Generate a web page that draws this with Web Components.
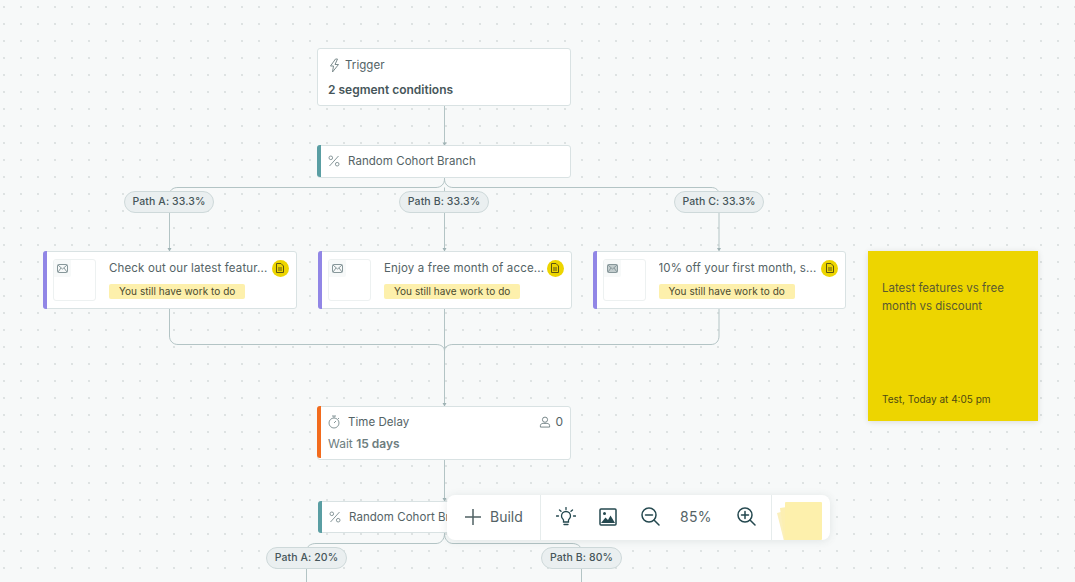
<!DOCTYPE html>
<html>
<head>
<meta charset="utf-8">
<title>Flow</title>
<style>
  html, body { margin: 0; height: 100%; overflow: hidden; }
  body { font-family: Inter, "Liberation Sans", sans-serif; color: #4c5b5e; }
</style>
</head>
<body>
<flow-canvas>
  <svg slot="edges" width="1075" height="582" viewBox="0 0 1075 582" fill="none" stroke="#b3c4c5" stroke-width="1">
    <path d="M444.5 106V143"/>
    <path d="M444.5 178V179C444.5 184 441 187.500 436 187.500H178C173 187.500 169.500 190 169.500 195V249"/>
    <path d="M444.500 178V179C444.500 184 448 187.500 453 187.500H711C716 187.500 719 190 719 195V249"/>
    <path d="M444.500 187.500V249"/>
    <path d="M169.500 309V336C169.500 341 173 344.500 178 344.500H436C441 344.500 444.500 347 444.500 351"/>
    <path d="M719 309V336C719 341 716 344.500 711 344.500H453C448 344.500 444.500 347 444.500 351"/>
    <path d="M444.500 309V404"/>
    <path d="M444.500 460V499"/>
    <path d="M444.500 533V534C444.500 539 441 543.500 436 543.500H316C311 543.500 306.500 546 306.500 551V582"/>
    <path d="M444.500 533V534C444.500 539 448 543.500 453 543.500H572C577 543.500 581.500 546 581.500 551V582"/>
    <g fill="#9fb2b4" stroke="none">
      <path d="M442.500 142.500H446.500L444.500 146Z"/>
      <path d="M167.500 248H171.500L169.500 251.500Z"/>
      <path d="M442.500 248H446.500L444.500 251.500Z"/>
      <path d="M717 248H721L719 251.500Z"/>
      <path d="M442.500 403H446.500L444.500 406.500Z"/>
      <path d="M442.500 498H446.500L444.500 501.500Z"/>
    </g>
  </svg>

  <flow-node style="left:317px;top:48px;width:254px;height:58px">
    <node-title label="Trigger" gap="5">
      <svg slot="icon" width="11" height="15" viewBox="0 0 11 15" fill="none" stroke="#7d8c8e" stroke-width="1" stroke-linejoin="round"><path d="M6.500 1 1.500 8H4.500L3.500 14 9.500 6.500H6L8.500 1Z"/></svg>
    </node-title>
    <div slot="body" style="font-weight:600;font-size:12px;color:#46565a;margin-top:9px">2 segment conditions</div>
  </flow-node>

  <flow-node accent="#5a9ea3" style="left:317px;top:145px;width:254px;height:33px;padding-bottom:1px">
    <node-title label="Random Cohort Branch">
      <svg slot="icon" width="12" height="12" viewBox="0 0 12 12" fill="none" stroke="#87979a" stroke-width="1"><path d="M10.500 1 1.500 11"/><circle cx="2.800" cy="2.800" r="1.800"/><circle cx="9.200" cy="9.200" r="1.800"/></svg>
    </node-title>
  </flow-node>

  <path-pill style="left:124px;top:191px;width:90px">Path A: 33.3%</path-pill>
  <path-pill style="left:399px;top:191px;width:90px">Path B: 33.3%</path-pill>
  <path-pill style="left:674px;top:191px;width:90px">Path C: 33.3%</path-pill>

  <message-node style="left:43px;top:251px" label="Check out our latest featur..."></message-node>
  <message-node style="left:318px;top:251px" label="Enjoy a free month of acce..."></message-node>
  <message-node style="left:592.500px;top:251px" label="10% off your first month, s..." filled></message-node>

  <flow-node accent="#f26b1d" style="left:317px;top:406px;width:254px;height:54px;padding-bottom:2px">
    <node-title label="Time Delay" count="0">
      <svg slot="icon" width="12" height="14" viewBox="0 0 12 14" fill="none" stroke="#87979a" stroke-width="1"><circle cx="6" cy="8" r="5"/><path d="M4 1H8M6 1V3M6 8 8 6M10 3 11 4"/></svg>
    </node-title>
    <div slot="body" style="font-size:12px;color:#6d7d80;margin-top:6px">Wait <b style="font-weight:600">15 days</b></div>
  </flow-node>

  <flow-node accent="#5a9ea3" style="left:318px;top:501px;width:253px;height:32px">
    <node-title label="Random Cohort Branch">
      <svg slot="icon" width="12" height="12" viewBox="0 0 12 12" fill="none" stroke="#87979a" stroke-width="1"><path d="M10.500 1 1.500 11"/><circle cx="2.800" cy="2.800" r="1.800"/><circle cx="9.200" cy="9.200" r="1.800"/></svg>
    </node-title>
  </flow-node>

  <path-pill style="left:266px;top:547px;width:81px">Path A: 20%</path-pill>
  <path-pill style="left:541px;top:547px;width:81px">Path B: 80%</path-pill>

  <sticky-note style="left:868px;top:251px" footer="Test, Today at 4:05 pm">Latest features vs free month vs discount</sticky-note>

  <build-toolbar style="left:447px;top:495px"></build-toolbar>
</flow-canvas>

<template id="flow-canvas">
  <style>
    :host {
      display: block;
      position: relative;
      width: 1075px;
      height: 582px;
      overflow: hidden;
      background-color: #f7f9f9;
      background-image: radial-gradient(circle at 1px 1px, #dde2e2 0.7px, transparent 1px);
      background-size: 17px 17px;
      background-position: 3px 6px;
    }
    ::slotted(svg) { position: absolute; left: 0; top: 0; }
  </style>
  <slot name="edges"></slot>
  <slot></slot>
</template>

<template id="flow-node">
  <style>
    :host {
      display: flex;
      position: absolute;
      box-sizing: border-box;
      background: #fff;
      border: 1px solid #d9e2e3;
      border-radius: 3px;
    }
    .accent { width: 4px; flex: none; margin: -1px 0 -1px -1px; border-radius: 3px 0 0 3px; }
    .main { flex: 1; min-width: 0; display: flex; flex-direction: column; justify-content: center; padding: 0 7px 0 10px; }
    :host([accent]) .main { padding-left: 7px; }
  </style>
  <div class="accent"></div>
  <div class="main">
    <slot></slot>
    <slot name="body"></slot>
  </div>
</template>

<template id="node-title">
  <style>
    :host { display: flex; align-items: center; font-size: 11.500px; letter-spacing: 0.05px; color: #546366; line-height: 16px; }
    .icon { display: flex; width: 12px; justify-content: center; margin-right: var(--gap, 8px); }
    .label { flex: 1; }
    .count { display: none; align-items: center; gap: 4px; font-size: 12px; }
    :host([count]) .count { display: flex; }
  </style>
  <span class="icon"><slot name="icon"></slot></span>
  <span class="label"></span>
  <span class="count">
    <svg width="12" height="12" viewBox="0 0 13 13" fill="none" stroke="#6f7f82" stroke-width="1"><circle cx="6.500" cy="4" r="2.800"/><path d="M1.500 12V10.500C1.500 8.800 3 8 4.500 8H8.500C10 8 11.500 8.800 11.500 10.500V12Z"/></svg>
    <span class="num"></span>
  </span>
</template>

<template id="path-pill">
  <style>
    :host {
      display: flex;
      position: absolute;
      box-sizing: border-box;
      height: 21.500px;
      align-items: center;
      justify-content: center;
      background: #eaeff0;
      border: 1px solid #ced9da;
      border-radius: 11px;
      font-size: 10.500px;
      font-weight: 500;
      letter-spacing: 0.1px;
      color: #46565a;
      white-space: nowrap;
    }
  </style>
  <slot></slot>
</template>

<template id="message-node">
  <style>
    :host {
      display: flex;
      position: absolute;
      box-sizing: border-box;
      width: 253.500px;
      height: 58px;
      background: #fff;
      border: 1px solid #d9e2e3;
      border-radius: 3px;
    }
    .accent { width: 4px; flex: none; margin: -1px 0 -1px -1px; background: #9186e6; border-radius: 3px 0 0 3px; }
    .thumb {
      flex: none;
      width: 43px;
      height: 42px;
      margin: 7px 13px 0 6px;
      border: 1px solid #edf1f1;
      border-radius: 3px;
      box-sizing: border-box;
      position: relative;
    }
    .chip { width: 17px; height: 17px; background: #f7f9f9; border-radius: 2px 0 2px 0; display: flex; align-items: center; justify-content: center; }
    .main { flex: 1; min-width: 0; padding-top: 7px; }
    .row { display: flex; align-items: center; height: 18px; }
    .label { flex: 1; font-size: 11.500px; color: #546366; white-space: nowrap; overflow: hidden; letter-spacing: 0.15px; line-height: 18px; }
    .badge {
      flex: none;
      width: 17px;
      height: 17px;
      margin: 0 7px 0 0;
      border-radius: 50%;
      background: #edd500;
      display: flex;
      align-items: center;
      justify-content: center;
    }
    .tag {
      display: inline-block;
      margin-top: 7px;
      height: 15px;
      line-height: 15px;
      padding: 0 10px;
      border-radius: 2px;
      background: #fdf0ac;
      font-size: 10px;
      letter-spacing: 0.05px;
      color: #4a4a2e;
    }
  </style>
  <div class="accent"></div>
  <div class="thumb"><div class="chip">
    <svg class="mail" width="11" height="9" viewBox="0 0 11 9" fill="none" stroke="#87979a" stroke-width="1"><rect x="0.500" y="0.500" width="10" height="8" rx="1"/><path d="M1 1 5.500 5 10 1M1 8 4 4M10 8 7 4"/></svg>
  </div></div>
  <div class="main">
    <div class="row">
      <span class="label"></span>
      <span class="badge">
        <svg width="8" height="10" viewBox="0 0 8 10" fill="none" stroke="#5c5412" stroke-width="1"><path d="M.500 .500H5L7.500 3V9.500H.500Z"/><path d="M2 5H6M2 7H6" /></svg>
      </span>
    </div>
    <div class="tag">You still have work to do</div>
  </div>
</template>

<template id="sticky-note">
  <style>
    :host {
      display: flex;
      flex-direction: column;
      justify-content: space-between;
      position: absolute;
      box-sizing: border-box;
      width: 170px;
      height: 170px;
      padding: 28px 14px 16px;
      background: #edd500;
      box-shadow: 0 1px 6px rgba(0, 0, 0, 0.12);
      color: #5a5a30;
    }
    .text { font-size: 11.500px; line-height: 18px; }
    .footer { font-size: 10px; line-height: 12px; color: #4e4a12; }
  </style>
  <div class="text"><slot></slot></div>
  <div class="footer"></div>
</template>

<template id="build-toolbar">
  <style>
    :host {
      display: flex;
      align-items: stretch;
      position: absolute;
      box-sizing: border-box;
      width: 383px;
      height: 45px;
      background: #fff;
      border-radius: 8px;
      box-shadow: 0 1px 8px rgba(60, 80, 85, 0.12);
      overflow: hidden;
      color: #546366;
      font-size: 14px;
    }
    .build { width: 94px; box-sizing: border-box; display: flex; align-items: center; gap: 9px; padding: 0 0 2px 18px; border-right: 1px solid #e6ecec; }
    .tools { width: 231px; box-sizing: border-box; display: flex; align-items: center; padding: 0 0 2px 15px; border-right: 1px solid #e6ecec; }
    .tools svg { flex: none; }
    .pct { width: 57px; margin-left: 20px; letter-spacing: 0.3px; }
    .stack { flex: 1; position: relative; }
    .stack i { position: absolute; display: block; transform-origin: top left; }
    .stack .back { left: 5px; top: 18px; width: 26px; height: 40px; transform: rotate(-14deg); background: #fbf0bd; }
    .stack .mid { left: 8px; top: 13px; width: 28px; height: 42px; transform: rotate(-8deg); background: #fcefb2; }
    .stack .top { left: 13px; top: 7px; width: 37px; height: 38px; border-radius: 1px; background: #fdf0ac; }
  </style>
  <div class="build">
    <svg width="16" height="16" viewBox="0 0 16 16" fill="none" stroke="#4f6063" stroke-width="1.500"><path d="M8 0V16M0 8H16"/></svg>
    <span>Build</span>
  </div>
  <div class="tools">
    <svg width="20" height="20" viewBox="0 0 20 20" fill="none" stroke="#24484f" stroke-width="1.300" stroke-linecap="round"><path d="M7.500 13C6.500 11.500 5.500 11 5.500 9A4.500 4.500 0 0 1 14.500 9C14.500 11 13.500 11.500 12.500 13V15H7.500Z"/><path d="M8 17.500H12M10 .500V2.500M3.500 3 5 4.300M16.500 3 15 4.300M.500 9H2.500M17.500 9H19.500"/></svg>
    <svg style="margin-left:23px" width="18" height="18" viewBox="0 0 18 18" fill="none" stroke="#24484f" stroke-width="1.500"><rect x="1" y="1" width="16" height="16" rx="1"/><circle cx="5.500" cy="5.500" r="1.500" fill="#24484f" stroke="none"/><path d="M2 15 6.500 9.500 9 12 11.500 7.500 16 15Z" fill="#24484f" stroke="none"/></svg>
    <svg style="margin-left:24px" width="19" height="19" viewBox="0 0 19 19" fill="none" stroke="#24484f" stroke-width="1.500" stroke-linecap="round"><circle cx="8" cy="8" r="7"/><path d="M4.500 8H11.500M13 13 18 18"/></svg>
    <span class="pct">85%</span>
    <svg width="19" height="19" viewBox="0 0 19 19" fill="none" stroke="#24484f" stroke-width="1.500" stroke-linecap="round"><circle cx="8" cy="8" r="7"/><path d="M4.500 8H11.500M8 4.500V11.500M13 13 18 18"/></svg>
  </div>
  <div class="stack"><i class="back"></i><i class="mid"></i><i class="top"></i></div>
</template>

<script>
  function fromTemplate(id) {
    return document.getElementById(id).content.cloneNode(true);
  }

  class FlowCanvas extends HTMLElement {
    constructor() {
      super();
      this.attachShadow({ mode: 'open' }).appendChild(fromTemplate('flow-canvas'));
    }
  }

  class FlowNode extends HTMLElement {
    constructor() {
      super();
      this.attachShadow({ mode: 'open' }).appendChild(fromTemplate('flow-node'));
    }

    connectedCallback() {
      const accent = this.getAttribute('accent');
      this.shadowRoot.querySelector('.accent').style.background = accent || 'transparent';
      if (!accent) this.shadowRoot.querySelector('.accent').style.display = 'none';
    }
  }

  class NodeTitle extends HTMLElement {
    constructor() {
      super();
      this.attachShadow({ mode: 'open' }).appendChild(fromTemplate('node-title'));
    }

    connectedCallback() {
      this.shadowRoot.querySelector('.label').textContent = this.getAttribute('label');
      this.shadowRoot.querySelector('.num').textContent = this.getAttribute('count') || '';
      if (this.hasAttribute('gap')) this.style.setProperty('--gap', this.getAttribute('gap') + 'px');
    }
  }

  class PathPill extends HTMLElement {
    constructor() {
      super();
      this.attachShadow({ mode: 'open' }).appendChild(fromTemplate('path-pill'));
    }
  }

  class MessageNode extends HTMLElement {
    constructor() {
      super();
      this.attachShadow({ mode: 'open' }).appendChild(fromTemplate('message-node'));
    }

    connectedCallback() {
      this.shadowRoot.querySelector('.label').textContent = this.getAttribute('label');
      if (this.hasAttribute('filled')) {
        const mail = this.shadowRoot.querySelector('.mail');
        mail.querySelector('rect').setAttribute('fill', '#c3cdce');
      }
    }
  }

  class StickyNote extends HTMLElement {
    constructor() {
      super();
      this.attachShadow({ mode: 'open' }).appendChild(fromTemplate('sticky-note'));
    }

    connectedCallback() {
      this.shadowRoot.querySelector('.footer').textContent = this.getAttribute('footer');
    }
  }

  class BuildToolbar extends HTMLElement {
    constructor() {
      super();
      this.attachShadow({ mode: 'open' }).appendChild(fromTemplate('build-toolbar'));
    }
  }

  customElements.define('flow-canvas', FlowCanvas);
  customElements.define('flow-node', FlowNode);
  customElements.define('node-title', NodeTitle);
  customElements.define('path-pill', PathPill);
  customElements.define('message-node', MessageNode);
  customElements.define('sticky-note', StickyNote);
  customElements.define('build-toolbar', BuildToolbar);
</script>
</body>
</html>
